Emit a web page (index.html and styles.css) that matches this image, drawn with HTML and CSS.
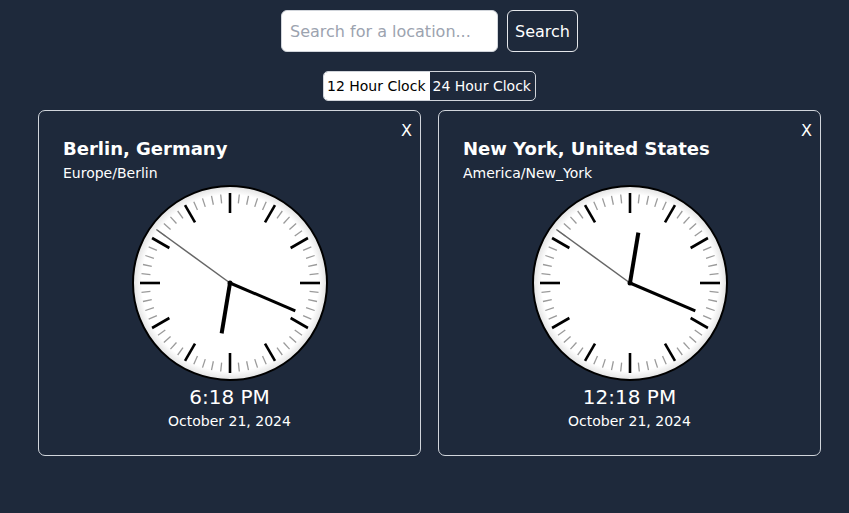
FILE: index.html
```html
<!DOCTYPE html>
<html>
<head>
<meta charset="utf-8">
<link rel="stylesheet" href="styles.css">
</head>
<body>
<div class="page">
  <form class="search">
    <input class="search-input" type="text" placeholder="Search for a location...">
    <button class="search-btn" type="button">Search</button>
  </form>
  <div class="toggle">
    <button class="toggle-btn active" type="button">12 Hour Clock</button><button class="toggle-btn" type="button">24 Hour Clock</button>
  </div>
  <div class="cards">
    <div class="card">
      <button class="close" type="button">X</button>
      <h2 class="city">Berlin, Germany</h2>
      <div class="zone">Europe/Berlin</div>
      <div class="clock">
        <svg class="clock-svg" viewBox="0 0 196 196" width="196" height="196" data-h="6" data-m="18" data-s="51"></svg>
      </div>
      <div class="time">6:18 PM</div>
      <div class="date">October 21, 2024</div>
    </div>
    <div class="card">
      <button class="close" type="button">X</button>
      <h2 class="city">New York, United States</h2>
      <div class="zone">America/New_York</div>
      <div class="clock">
        <svg class="clock-svg" viewBox="0 0 196 196" width="196" height="196" data-h="12" data-m="18" data-s="51"></svg>
      </div>
      <div class="time">12:18 PM</div>
      <div class="date">October 21, 2024</div>
    </div>
  </div>
</div>
<script src="clock.js"></script>
</body>
</html>
```
FILE: styles.css
```css
* { box-sizing: border-box; }
html, body { margin: 0; padding: 0; }
body {
  background: #1e293b;
  color: #ffffff;
  font-family: "DejaVu Sans", sans-serif;
  width: 849px;
  height: 513px;
  overflow: hidden;
}
.page {
  padding: 10px 28px 0 38px;
  display: flex;
  flex-direction: column;
  align-items: center;
}
.search {
  display: flex;
  gap: 9px;
  margin: 0;
}
.search-input {
  width: 217px;
  height: 42px;
  border: 1px solid #d1d5db;
  border-radius: 6px;
  padding: 0 8px;
  font-family: "DejaVu Sans", sans-serif;
  font-size: 16px;
  color: #111;
  background: #fff;
  outline: none;
}
.search-input::placeholder { color: #9ca3af; }
.search-btn {
  height: 42px;
  width: 71px;
  border: 1px solid #e5e7eb;
  border-radius: 6px;
  background: transparent;
  color: #fff;
  font-family: "DejaVu Sans", sans-serif;
  font-size: 16px;
  padding: 0;
}
.toggle {
  margin-top: 19px;
  display: flex;
  border: 1px solid #d1d5db;
  border-radius: 5px;
  overflow: hidden;
  height: 30px;
}
.toggle-btn {
  border: 0;
  background: transparent;
  color: #fff;
  font-family: "DejaVu Sans", sans-serif;
  font-size: 14px;
  padding: 0 4px 0 3px;
  height: 28px;
}
.toggle-btn.active {
  background: #fff;
  color: #000;
}
.cards {
  margin-top: 9px;
  display: flex;
  gap: 17px;
  width: 783px;
}
.card {
  position: relative;
  flex: 1;
  border: 1px solid #d1d5db;
  border-radius: 7px;
  padding: 24px 24px 24px 24px;
  display: flex;
  flex-direction: column;
}
.close {
  position: absolute;
  top: 10px;
  right: 8px;
  border: 0;
  background: transparent;
  color: #fff;
  font-family: "DejaVu Sans", sans-serif;
  font-size: 16px;
  padding: 0;
}
.city {
  margin: 0;
  font-size: 18px;
  font-weight: bold;
  line-height: 27px;
}
.zone {
  font-size: 14px;
  line-height: 20px;
  margin-top: 1px;
}
.clock {
  display: flex;
  justify-content: center;
  margin-top: 2px;
}
.clock-svg { display: block; }
.time {
  text-align: center;
  font-size: 20px;
  line-height: 28px;
  margin-top: 2px;
}
.date {
  text-align: center;
  font-size: 14px;
  line-height: 20px;
}
```
FILE: clock.js
```js
var NS = "http://www.w3.org/2000/svg";
function el(name, attrs, parent) {
  var e = document.createElementNS(NS, name);
  for (var k in attrs) e.setAttribute(k, attrs[k]);
  parent.appendChild(e);
  return e;
}
document.querySelectorAll(".clock-svg").forEach(function (svg, idx) {
  var c = 98;
  var defs = el("defs", {}, svg);
  var gid = "face" + idx;
  var g = el("radialGradient", { id: gid, cx: "50%", cy: "50%", r: "50%" }, defs);
  el("stop", { offset: "0%", "stop-color": "#ffffff" }, g);
  el("stop", { offset: "91%", "stop-color": "#ffffff" }, g);
  el("stop", { offset: "100%", "stop-color": "#e2e2e2" }, g);
  el("circle", { cx: c, cy: c, r: 97, fill: "url(#" + gid + ")", stroke: "#000", "stroke-width": 2 }, svg);
  for (var i = 0; i < 60; i++) {
    var a = i * 6 * Math.PI / 180;
    var sx = Math.sin(a), cy = -Math.cos(a);
    if (i % 5 === 0) {
      el("line", { x1: c + sx * 70, y1: c + cy * 70, x2: c + sx * 90, y2: c + cy * 90, stroke: "#000", "stroke-width": 2.6 }, svg);
    } else {
      el("line", { x1: c + sx * 80, y1: c + cy * 80, x2: c + sx * 89, y2: c + cy * 89, stroke: "#9a9a9a", "stroke-width": 1.3 }, svg);
    }
  }
  var h = +svg.dataset.h, m = +svg.dataset.m, s = +svg.dataset.s;
  var sa = s * 6;
  var ma = (m + s / 60) * 6;
  var ha = ((h % 12) + (m + s / 60) / 60) * 30;
  function hand(angle, len, w, col) {
    var a = angle * Math.PI / 180;
    el("line", { x1: c, y1: c, x2: c + Math.sin(a) * len, y2: c - Math.cos(a) * len, stroke: col, "stroke-width": w, "stroke-linecap": "butt" }, svg);
  }
  hand(ha, 51, 4, "#000");
  hand(ma, 71, 3, "#000");
  hand(sa, 91, 1.5, "#666");
  el("circle", { cx: c, cy: c, r: 2.5, fill: "#000" }, svg);
});
```
